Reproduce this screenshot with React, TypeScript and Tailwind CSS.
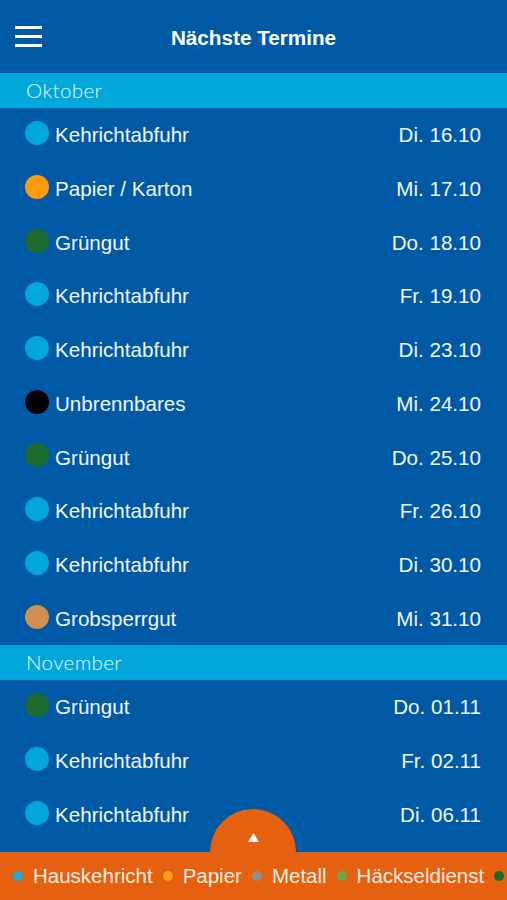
import React from "react";

type Termin = { name: string; date: string; color: string };

const oktober: Termin[] = [
  { name: "Kehrichtabfuhr", date: "Di. 16.10", color: "bg-[#00a6dc]" },
  { name: "Papier / Karton", date: "Mi. 17.10", color: "bg-[#fd9b0b]" },
  { name: "Grüngut", date: "Do. 18.10", color: "bg-[#1c6a30]" },
  { name: "Kehrichtabfuhr", date: "Fr. 19.10", color: "bg-[#00a6dc]" },
  { name: "Kehrichtabfuhr", date: "Di. 23.10", color: "bg-[#00a6dc]" },
  { name: "Unbrennbares", date: "Mi. 24.10", color: "bg-black" },
  { name: "Grüngut", date: "Do. 25.10", color: "bg-[#1c6a30]" },
  { name: "Kehrichtabfuhr", date: "Fr. 26.10", color: "bg-[#00a6dc]" },
  { name: "Kehrichtabfuhr", date: "Di. 30.10", color: "bg-[#00a6dc]" },
  { name: "Grobsperrgut", date: "Mi. 31.10", color: "bg-[#d28f52]" },
];

const november: Termin[] = [
  { name: "Grüngut", date: "Do. 01.11", color: "bg-[#1c6a30]" },
  { name: "Kehrichtabfuhr", date: "Fr. 02.11", color: "bg-[#00a6dc]" },
  { name: "Kehrichtabfuhr", date: "Di. 06.11", color: "bg-[#00a6dc]" },
];

const legend = [
  { label: "Hauskehricht", color: "bg-[#1fa9db]" },
  { label: "Papier", color: "bg-[#ff9e1a]" },
  { label: "Metall", color: "bg-[#8f8f8f]" },
  { label: "Häckseldienst", color: "bg-[#6aa84f]" },
];

function MonthHeader({ title }: { title: string }) {
  return (
    <div className="h-[35px] bg-[#00a7da] flex items-center px-[26px]">
      <span className="text-[20.5px] font-light text-[#eef6fb] font-['Lato',sans-serif] tracking-[0.4px]">
        {title}
      </span>
    </div>
  );
}

function Row({ t }: { t: Termin }) {
  return (
    <div className="h-[53.7px] flex items-center pl-[25px] pr-[26px] pt-[2px]">
      <div className={`w-[24px] h-[24px] rounded-full ${t.color} mb-[5px] shrink-0`} />
      <span className="ml-[6px] text-[20.6px] text-[#f2f6fb]">{t.name}</span>
      <span className="ml-auto text-[20.6px] text-[#f2f6fb]">{t.date}</span>
    </div>
  );
}

export default function App() {
  return (
    <div className="w-[507px] h-[900px] bg-[#0059a4] overflow-hidden flex flex-col font-['Liberation_Sans',Arial,sans-serif]">
      <div className="h-[73px] flex items-center relative shrink-0">
        <div className="absolute left-[15px] top-[26px] flex flex-col gap-[6px]">
          <div className="w-[27px] h-[3px] bg-white" />
          <div className="w-[27px] h-[3px] bg-white" />
          <div className="w-[27px] h-[3px] bg-white" />
        </div>
        <div className="w-full text-center text-[20.7px] font-bold text-white mt-[2px]">
          Nächste Termine
        </div>
      </div>

      <div className="flex-1 overflow-hidden relative">
        <MonthHeader title="Oktober" />
        {oktober.map((t, i) => (
          <Row key={"o" + i} t={t} />
        ))}
        <MonthHeader title="November" />
        {november.map((t, i) => (
          <Row key={"n" + i} t={t} />
        ))}
        <div className="absolute left-[210px] bottom-0 w-[86px] h-[43px] rounded-t-full bg-[#e5600f] flex justify-center pt-[24px]">
          <svg width="11" height="9" viewBox="0 0 11 9">
            <polygon points="5.5,0 11,9 0,9" fill="white" />
          </svg>
        </div>
      </div>

      <div className="h-[48px] bg-[#e5600f] flex items-center pl-[13px] gap-[10px] whitespace-nowrap shrink-0 overflow-hidden">
        {legend.map((l) => (
          <div key={l.label} className="flex items-center gap-[10px] shrink-0">
            <div className={`w-[10px] h-[10px] rounded-full ${l.color}`} />
            <span className="text-[20.5px] text-[#fbeee6]">{l.label}</span>
          </div>
        ))}
        <div className="w-[10px] h-[10px] rounded-full bg-[#1c6a30] shrink-0" />
      </div>
    </div>
  );
}
